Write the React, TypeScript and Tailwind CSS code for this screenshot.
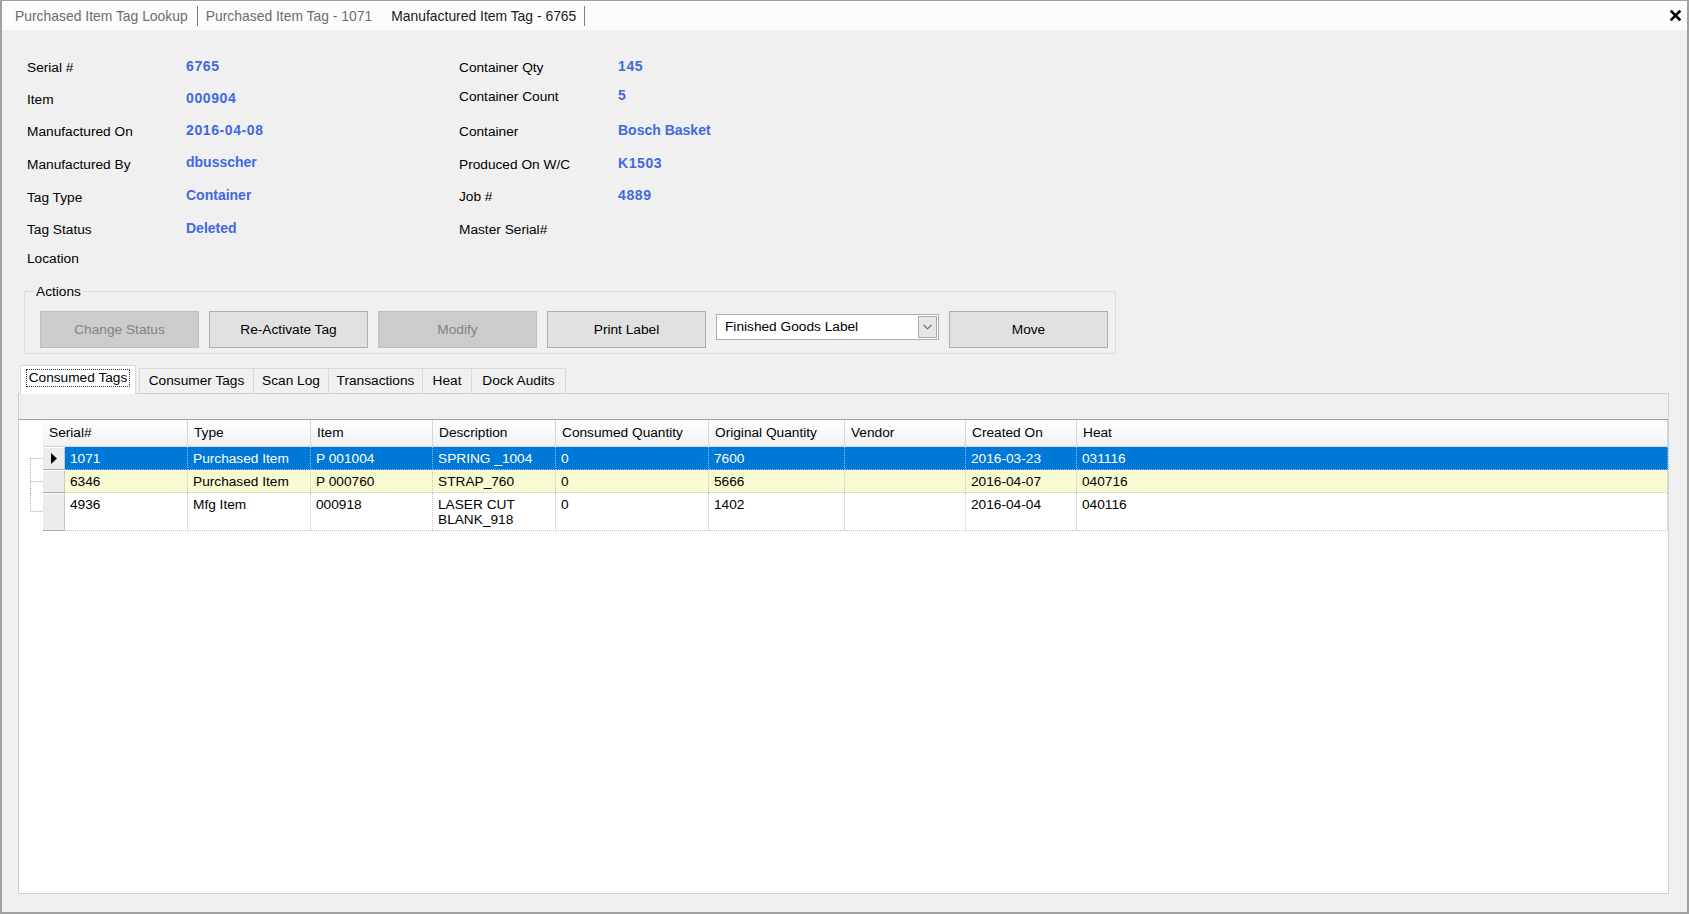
import React from "react";

const leftRows = [
  { label: "Serial #", value: "6765", h: "h-[32px]" },
  { label: "Item", value: "000904", h: "h-[32px]" },
  { label: "Manufactured On", value: "2016-04-08", h: "h-[32px]" },
  { label: "Manufactured By", value: "dbusscher", h: "h-[33px]" },
  { label: "Tag Type", value: "Container", h: "h-[33px]" },
  { label: "Tag Status", value: "Deleted", h: "h-[32px]" },
  { label: "Location", value: "", h: "h-[26px]" },
];

const rightRows = [
  { label: "Container Qty", value: "145", h: "h-[32px]" },
  { label: "Container Count", value: "5", h: "h-[26px]" },
  { label: "Container", value: "Bosch Basket", h: "h-[44px]" },
  { label: "Produced On W/C", value: "K1503", h: "h-[22px]" },
  { label: "Job #", value: "4889", h: "h-[42px]" },
  { label: "Master Serial#", value: "", h: "h-[24px]" },
];

const cols = [
  { name: "Serial#", w: "w-[123px]", hw: "w-[145px]" },
  { name: "Type", w: "w-[123px]", hw: "w-[123px]" },
  { name: "Item", w: "w-[122px]", hw: "w-[122px]" },
  { name: "Description", w: "w-[123px]", hw: "w-[123px]" },
  { name: "Consumed Quantity", w: "w-[153px]", hw: "w-[153px]" },
  { name: "Original Quantity", w: "w-[136px]", hw: "w-[136px]" },
  { name: "Vendor", w: "w-[121px]", hw: "w-[121px]" },
  { name: "Created On", w: "w-[111px]", hw: "w-[111px]" },
  { name: "Heat", w: "flex-1", hw: "flex-1" },
];

const rows = [
  {
    cells: ["1071", "Purchased Item", "P 001004", "SPRING _1004", "0", "7600", "", "2016-03-23", "031116"],
    h: "h-[23px]",
    kind: "sel",
    tree: "first",
  },
  {
    cells: ["6346", "Purchased Item", "P 000760", "STRAP_760", "0", "5666", "", "2016-04-07", "040716"],
    h: "h-[23px]",
    kind: "alt",
    tree: "mid",
  },
  {
    cells: ["4936", "Mfg Item", "000918", "LASER CUT|BLANK_918", "0", "1402", "", "2016-04-04", "040116"],
    h: "h-[38px]",
    kind: "norm",
    tree: "last",
  },
];

function Tree({ type, height }: { type: string; height: number }) {
  const cy = type === "last" ? 18 : 11;
  return (
    <svg width="24" height={height} className="block shrink-0">
      <line x1="11.5" y1={cy + 0.5} x2="24" y2={cy + 0.5} stroke="#a8a8a8" strokeWidth="1" strokeDasharray="1 1" />
      {type === "first" && (
        <line x1="11.5" y1={cy} x2="11.5" y2={height} stroke="#a8a8a8" strokeWidth="1" strokeDasharray="1 1" />
      )}
      {type === "mid" && (
        <line x1="11.5" y1="0" x2="11.5" y2={height} stroke="#a8a8a8" strokeWidth="1" strokeDasharray="1 1" />
      )}
      {type === "last" && (
        <line x1="11.5" y1="0" x2="11.5" y2={cy} stroke="#a8a8a8" strokeWidth="1" strokeDasharray="1 1" />
      )}
    </svg>
  );
}

function Btn({ label, disabled }: { label: string; disabled?: boolean }) {
  return (
    <div
      className={
        disabled
          ? "w-[159px] h-[37px] flex items-center justify-center bg-[#cccccc] border border-[#bfbfbf] text-[#838383]"
          : "w-[159px] h-[37px] flex items-center justify-center bg-[#e1e1e1] border border-[#adadad] text-black"
      }
    >
      {label}
    </div>
  );
}

function Value({ v }: { v: string }) {
  return (
    <span
      className={
        /\d/.test(v)
          ? "mb-[5px] font-bold text-[14px] tracking-[0.6px] text-[#4169e1]"
          : "mb-[5px] font-bold text-[14px] text-[#4169e1]"
      }
    >
      {v}
    </span>
  );
}

export default function App() {
  return (
    <div className="w-[1689px] h-[914px] overflow-hidden bg-[#f0f0f0] border-t border-l-2 border-r-2 border-b-2 border-[#a0a0a0] flex flex-col font-['Liberation_Sans',Arial,sans-serif] text-[13.7px] leading-[16px] text-black">
      {/* Top document tabs */}
      <div className="h-[29px] shrink-0 bg-[#fcfcfc] flex items-center pl-[13px] text-[13.9px]">
        <span className="text-[#6d6d6d]">Purchased Item Tag Lookup</span>
        <span className="ml-[9px] w-px h-[20px] bg-[#808080]" />
        <span className="ml-[8px] text-[#6d6d6d]">Purchased Item Tag - 1071</span>
        <span className="ml-[19px] text-[#1a1a1a]">Manufactured Item Tag - 6765</span>
        <span className="ml-[8px] w-px h-[20px] bg-[#808080]" />
        <svg width="11" height="11" viewBox="0 0 11 11" className="ml-auto mr-[6px]">
          <path d="M1.5 1.5 L9.5 9.5 M9.5 1.5 L1.5 9.5" stroke="#000" strokeWidth="2.6" strokeLinecap="square" />
        </svg>
      </div>

      {/* Content */}
      <div className="flex-1 flex flex-col pl-[16px] pr-[18px] pb-[18px]">
        {/* Info section */}
        <div className="flex pt-[22px] ml-[9px]">
          <div className="w-[432px] flex flex-col">
            {leftRows.map((r) => (
              <div key={r.label} className={"flex items-center " + r.h}>
                <span className="w-[159px] shrink-0">{r.label}</span>
                <Value v={r.value} />
              </div>
            ))}
          </div>
          <div className="flex flex-col">
            {rightRows.map((r) => (
              <div key={r.label} className={"flex items-center " + r.h}>
                <span className="w-[159px] shrink-0">{r.label}</span>
                <Value v={r.value} />
              </div>
            ))}
          </div>
        </div>

        {/* Actions group box */}
        <div className="relative ml-[6px] mt-[19px] w-[1092px] h-[63px] border border-[#dcdcdc] rounded-[2px] pt-[19px] pl-[15px]">
          <span className="absolute left-[10px] -top-[8px] px-[1px] bg-[#f0f0f0]">Actions</span>
          <div className="flex gap-[10px]">
            <Btn label="Change Status" disabled />
            <Btn label="Re-Activate Tag" />
            <Btn label="Modify" disabled />
            <Btn label="Print Label" />
            <div className="w-[223px] h-[26px] mt-[3px] bg-white border border-[#abadb3] flex items-center">
              <span className="pl-[8px] flex-1">Finished Goods Label</span>
              <div className="w-[19px] h-[22px] mr-[1px] bg-[#e6e6e6] border border-[#acacac] flex items-center justify-center">
                <svg width="9" height="6" viewBox="0 0 9 6">
                  <path d="M0.5 0.8 L4.5 4.8 L8.5 0.8" stroke="#606060" strokeWidth="1.1" fill="none" />
                </svg>
              </div>
            </div>
            <Btn label="Move" />
          </div>
        </div>

        {/* Tab control */}
        <div className="mt-[11px] h-[28px] flex items-end shrink-0">
          <div className="relative z-10 ml-[2px] w-[116px] h-[29px] -mb-px bg-white border-t border-l border-r border-[#d9d9d9] flex items-start justify-center pt-[3px]">
            <span className="px-[2px] border border-dotted border-[#333]">Consumed Tags</span>
          </div>
          <div className="ml-[3px] w-[115px] h-[25px] border-t border-r border-l border-[#d9d9d9] flex items-center justify-center">Consumer Tags</div>
          <div className="w-[75px] h-[25px] border-t border-r border-[#d9d9d9] flex items-center justify-center">Scan Log</div>
          <div className="w-[94px] h-[25px] border-t border-r border-[#d9d9d9] flex items-center justify-center">Transactions</div>
          <div className="w-[49px] h-[25px] border-t border-r border-[#d9d9d9] flex items-center justify-center">Heat</div>
          <div className="w-[94px] h-[25px] border-t border-r border-[#d9d9d9] flex items-center justify-center">Dock Audits</div>
        </div>

        <div className="flex-1 border border-[#c6d2df] bg-white flex flex-col">
          <div className="h-[26px] shrink-0 bg-[#f0f0f0] border-b border-[#a0a0a0]" />
          {/* Header */}
          <div className="h-[27px] flex shrink-0">
            <div className="w-[24px] shrink-0 bg-white" />
            {cols.map((c) => (
              <div
                key={c.name}
                className={
                  c.hw +
                  " shrink-0 h-full flex items-center pl-[6px] bg-linear-to-b from-white to-[#f1f1f1] border-r border-b border-[#d5d5d5] whitespace-nowrap overflow-hidden"
                }
              >
                {c.name}
              </div>
            ))}
          </div>
          {/* Rows */}
          {rows.map((r, i) => {
            const height = r.h === "h-[38px]" ? 38 : 23;
            const bg =
              r.kind === "sel" ? "bg-[#0078d7] text-white" : r.kind === "alt" ? "bg-[#fafad2] text-black" : "bg-white text-black";
            const bc = r.kind === "sel" ? "border-[#8fbfe8]" : "border-[#c4c4c4]";
            return (
              <div key={i} className={"flex shrink-0 " + r.h}>
                <Tree type={r.tree} height={height} />
                <div className="w-[22px] shrink-0 h-full bg-[#ececec] border-b border-r border-b-[#a9a9a9] border-r-[#c8c8c8] border-t border-t-white flex items-start justify-center pt-[5px]">
                  {r.kind === "sel" && (
                    <svg width="6" height="11" viewBox="0 0 6 11">
                      <path d="M0 0 L6 5.5 L0 11 Z" fill="#000" />
                    </svg>
                  )}
                </div>
                <div className={"flex flex-1 h-full " + bg}>
                  {r.cells.map((cell, j) => (
                    <div
                      key={j}
                      className={
                        cols[j].w +
                        " shrink-0 h-full pl-[5px] pt-[4px] leading-[15px] border-r border-b border-dotted whitespace-nowrap overflow-hidden " +
                        bc
                      }
                    >
                      {cell.includes("|") ? (
                        <>
                          {cell.split("|")[0]}
                          <br />
                          {cell.split("|")[1]}
                        </>
                      ) : (
                        cell
                      )}
                    </div>
                  ))}
                </div>
              </div>
            );
          })}
        </div>
      </div>
    </div>
  );
}
